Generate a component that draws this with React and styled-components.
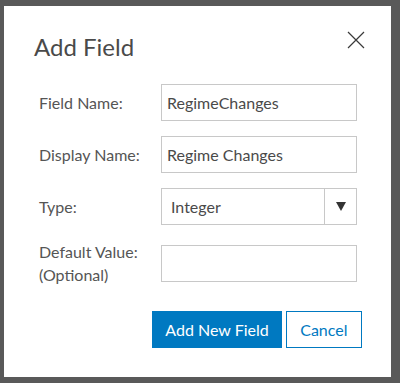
import React from "react";
import styled, { createGlobalStyle } from "styled-components";

const Global = createGlobalStyle`
  html, body { margin: 0; padding: 0; background: #595959; }
  body { font-family: "Lato", "Noto Sans", sans-serif; }
`;

const Page = styled.div`
  width: 400px;
  height: 383px;
  padding: 6px 9px 6px 4px;
  box-sizing: border-box;
`;

const Dialog = styled.div`
  width: 387px;
  height: 371px;
  background: #fff;
  box-sizing: border-box;
  padding: 26px 26px 0 30px;
  display: flex;
  flex-direction: column;
`;

const Header = styled.div`
  display: flex;
  justify-content: space-between;
  align-items: flex-start;
  height: 52px;
`;

const Title = styled.h2`
  margin: 0;
  font-weight: 400;
  font-size: 24px;
  line-height: 30px;
  color: #4a4a4a;
`;

const Close = styled.button`
  border: 0;
  background: none;
  padding: 0;
  margin-top: -1px;
  width: 18px;
  height: 18px;
  display: flex;
  cursor: pointer;
`;

const Form = styled.div`
  display: grid;
  grid-template-columns: 122px 196px;
  row-gap: 15px;
  align-items: center;
  padding-left: 5px;
`;

const Label = styled.label`
  font-size: 16px;
  line-height: 23px;
  color: #555;
`;

const Input = styled.div`
  height: 37px;
  box-sizing: border-box;
  border: 1px solid #c8c8c8;
  display: flex;
  align-items: center;
  padding-left: 5px;
  font-size: 16px;
  color: #4a4a4a;
`;

const Select = styled(Input)`
  padding-left: 0;
`;

const SelectText = styled.span`
  flex: 1;
  padding-left: 9px;
`;

const Arrow = styled.span`
  width: 31px;
  height: 100%;
  border-left: 1px solid #c8c8c8;
  display: flex;
  align-items: center;
  justify-content: center;
`;

const Actions = styled.div`
  display: flex;
  justify-content: flex-end;
  gap: 4px;
  margin-top: 25px;
  padding-right: 3px;
`;

const Button = styled.button`
  height: 37px;
  box-sizing: border-box;
  font-family: inherit;
  font-size: 16px;
  padding: 0 ${(p) => (p.$primary ? 12 : 13.5)}px;
  border: 1px solid #0079c1;
  background: ${(p) => (p.$primary ? "#0079c1" : "#fff")};
  color: ${(p) => (p.$primary ? "#fff" : "#0079c1")};
  cursor: pointer;
`;

export default function App() {
  return (
    <>
      <Global />
      <Page>
        <Dialog>
          <Header>
            <Title>Add Field</Title>
            <Close aria-label="Close">
              <svg width="18" height="18" viewBox="0 0 18 18">
                <path d="M1 1 L17 17 M17 1 L1 17" stroke="#3a3a3a" strokeWidth="1.2" fill="none" />
              </svg>
            </Close>
          </Header>
          <Form>
            <Label>Field Name:</Label>
            <Input>RegimeChanges</Input>
            <Label>Display Name:</Label>
            <Input>Regime Changes</Input>
            <Label>Type:</Label>
            <Select>
              <SelectText>Integer</SelectText>
              <Arrow>
                <svg width="10" height="9" viewBox="0 0 10 9">
                  <path d="M0 0 H10 L5 9 Z" fill="#333" />
                </svg>
              </Arrow>
            </Select>
            <Label>
              Default Value:
              <br />
              (Optional)
            </Label>
            <Input />
          </Form>
          <Actions>
            <Button $primary>Add New Field</Button>
            <Button>Cancel</Button>
          </Actions>
        </Dialog>
      </Page>
    </>
  );
}
